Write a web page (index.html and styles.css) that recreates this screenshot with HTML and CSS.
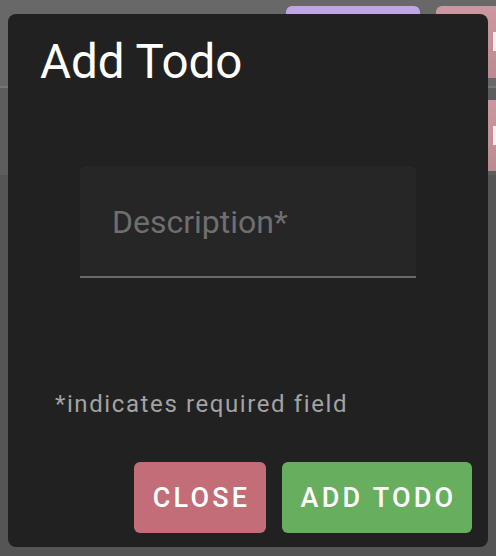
FILE: index.html
```html
<!DOCTYPE html>
<html>
<head>
<meta charset="utf-8">
<link rel="stylesheet" href="styles.css">
</head>
<body>
<div class="page">
  <div class="header">
    <div class="chip chip-purple"></div>
    <div class="chip chip-pink"><span class="glyph"></span></div>
  </div>
  <div class="row">
    <div class="chip chip-pink chip-row"><span class="glyph"></span></div>
  </div>
  <div class="rest"></div>
</div>

<div class="dialog">
  <h2 class="title">Add Todo</h2>
  <div class="field">
    <input class="field-input" type="text" placeholder="Description*">
  </div>
  <p class="helper">*indicates required field</p>
  <div class="actions">
    <button class="btn btn-close">CLOSE</button>
    <button class="btn btn-add">ADD TODO</button>
  </div>
</div>
</body>
</html>
```

FILE: styles.css
```css
html, body {
  margin: 0;
  padding: 0;
}
body {
  width: 496px;
  height: 556px;
  overflow: hidden;
  background: #555555;
  font-family: Roboto, "Noto Sans", sans-serif;
  position: relative;
}
.page {
  display: flex;
  flex-direction: column;
  height: 556px;
}
.header {
  height: 88px;
  box-sizing: border-box;
  background: #686868;
  border-bottom: 2px solid #767676;
  display: flex;
  align-items: flex-start;
  padding: 6px 0 0 286px;
  gap: 16px;
}
.chip {
  border-radius: 6px;
  position: relative;
  overflow: hidden;
  flex-shrink: 0;
}
.chip-purple {
  width: 134px;
  height: 40px;
  background: #c1a6e6;
}
.chip-pink {
  width: 80px;
  height: 72px;
  background: linear-gradient(#cb97a1, #bd8a93);
}
.glyph {
  position: absolute;
  left: 57px;
  top: 26px;
  width: 4px;
  height: 19px;
  background: #f0f0f0;
}
.row {
  height: 87px;
  background: #5d5d5d;
  display: flex;
  padding: 12px 0 0 436px;
  box-sizing: border-box;
}
.chip-row {
  height: 71px;
  border-radius: 6px 6px 0 0;
}
.rest {
  flex: 1;
  background: #555555;
}

.dialog {
  position: absolute;
  left: 8px;
  top: 14px;
  width: 480px;
  height: 533px;
  box-sizing: border-box;
  background: #212121;
  border-radius: 8px;
  display: flex;
  flex-direction: column;
  padding: 20px 16px 0 32px;
}
.title {
  margin: 0;
  font-size: 47.5px;
  font-weight: 400;
  color: #ffffff;
  line-height: 56px;
}
.field {
  margin: 76px 0 0 40px;
  width: 336px;
  height: 112px;
  box-sizing: border-box;
  background: #262626;
  border-radius: 6px 6px 0 0;
  border-bottom: 2px solid #6a6a6a;
  display: flex;
  align-items: center;
}
.field-input {
  width: 100%;
  box-sizing: border-box;
  border: none;
  outline: none;
  background: transparent;
  font-family: Roboto, "Noto Sans", sans-serif;
  font-size: 32px;
  color: #dddddd;
  padding: 0 0 0 32px;
  margin-top: 1px;
}
.field-input::placeholder {
  color: #6f6f6f;
  opacity: 1;
}
.helper {
  margin: 112px 0 0 15px;
  font-size: 24px;
  line-height: 28px;
  color: #a3a3a3;
  letter-spacing: 1.6px;
}
.actions {
  margin-top: 44px;
  display: flex;
  justify-content: flex-end;
  gap: 16px;
}
.btn {
  height: 71px;
  border: none;
  border-radius: 6px;
  font-family: Roboto, "Noto Sans", sans-serif;
  font-size: 27px;
  font-weight: 500;
  letter-spacing: 3.2px;
  color: #ffffff;
  padding: 0 0 0 3px;
}
.btn-close {
  width: 132px;
  background: #c26d78;
}
.btn-add {
  width: 190px;
  background: #67ae5e;
}
```
